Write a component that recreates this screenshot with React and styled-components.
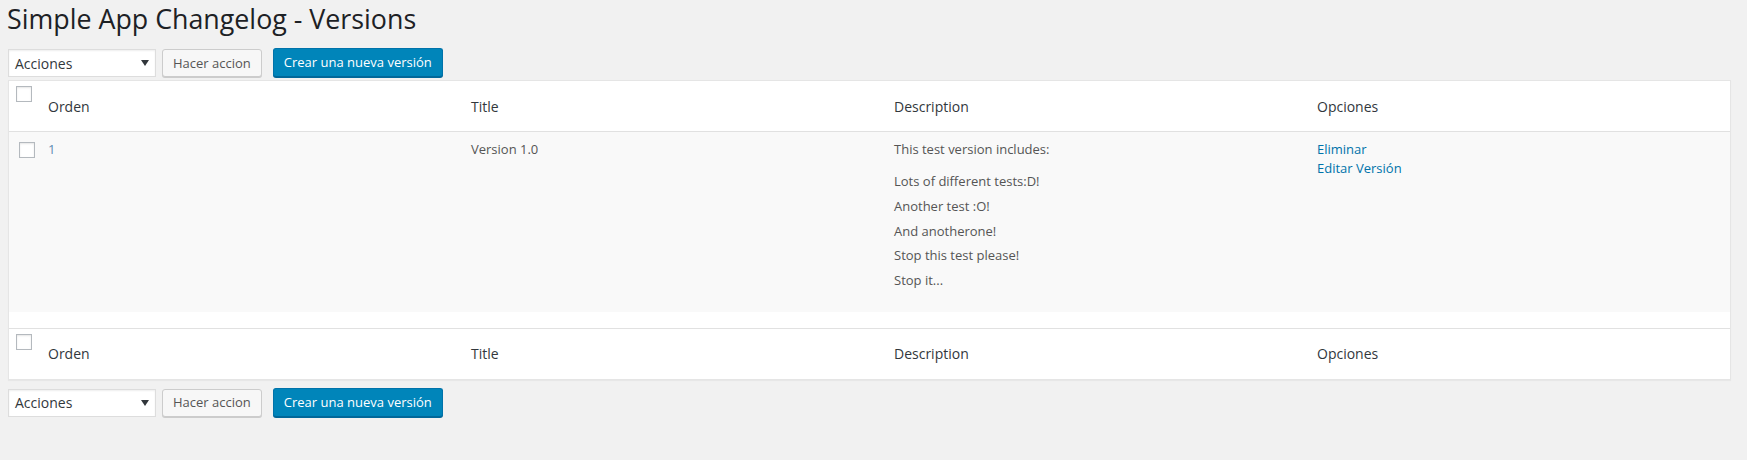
import React from 'react';
import styled, { createGlobalStyle } from 'styled-components';

const GlobalStyle = createGlobalStyle`
  html, body {
    margin: 0;
    padding: 0;
    background: #f1f1f1;
  }
  body {
    font-family: "Open Sans", sans-serif;
    color: #444;
    font-size: 13px;
  }
`;

const Wrap = styled.div`
  padding: 2px 16px 20px 8px;
`;

const Heading = styled.h1`
  margin: 0 0 0 -1px;
  font-size: 26.8px;
  font-weight: 400;
  line-height: 34px;
  color: #1d2125;
`;

const Toolbar = styled.div`
  display: flex;
  align-items: flex-end;
  margin-top: ${p => p.$top}px;
  margin-bottom: ${p => p.$bottom}px;
`;

const SelectBox = styled.div`
  box-sizing: border-box;
  width: 148px;
  height: 28px;
  display: flex;
  align-items: center;
  justify-content: space-between;
  padding: 0 6px 0 6px;
  background: #fff;
  border: 1px solid #ddd;
  box-shadow: inset 0 1px 2px rgba(0, 0, 0, 0.07);
  font-size: 14px;
  color: #32373c;
`;

const Button = styled.div`
  box-sizing: border-box;
  height: ${p => (p.$primary ? 29 : 28)}px;
  margin-left: ${p => p.$gap}px;
  padding: 0 10px 1px;
  display: flex;
  align-items: center;
  font-size: 13px;
  border-radius: 3px;
  white-space: nowrap;
  background: ${p => (p.$primary ? '#0085ba' : '#f7f7f7')};
  color: ${p => (p.$primary ? '#fff' : '#555')};
  border: 1px solid ${p => (p.$primary ? '#0073aa' : '#ccc')};
  border-bottom-color: ${p => (p.$primary ? '#006799' : '#ccc')};
  box-shadow: 0 1px 0 ${p => (p.$primary ? '#006799' : '#ccc')};
`;

const Table = styled.table`
  width: 100%;
  table-layout: fixed;
  border-collapse: separate;
  border-spacing: 0;
  background: #fff;
  border: 1px solid #e5e5e5;
  box-shadow: 0 1px 1px rgba(0, 0, 0, 0.04);
`;

const HeadCell = styled.th`
  height: 50px;
  padding: 0 10px;
  text-align: left;
  font-weight: 400;
  font-size: 14px;
  color: #32373c;
  vertical-align: middle;
  border-${p => (p.$foot ? 'top' : 'bottom')}: 1px solid #e1e1e1;
`;

const CheckHead = styled.th`
  padding: 5px 0 0 7px;
  vertical-align: top;
  border-${p => (p.$foot ? 'top' : 'bottom')}: 1px solid #e1e1e1;
`;

const Row = styled.tr`
  background: ${p => (p.$alt ? '#f9f9f9' : '#fff')};
`;

const Cell = styled.td`
  padding: 8px 10px;
  vertical-align: top;
  font-size: 13px;
  line-height: 18px;
  color: ${p => p.$color || '#555'};
`;

const CheckCell = styled.td`
  padding: 10px 0 0 10px;
  vertical-align: top;
`;

const Spacer = styled.td`
  height: 16px;
  padding: 0;
`;

const Box = styled.span`
  display: block;
  box-sizing: border-box;
  width: 16px;
  height: 16px;
  background: #fff;
  border: 1px solid #b4b9be;
  box-shadow: inset 0 1px 2px rgba(0, 0, 0, 0.1);
`;

const Intro = styled.p`
  margin: 0;
  line-height: 19.5px;
`;

const Changes = styled.ul`
  list-style: none;
  margin: 12.5px 0 14px;
  padding: 0;
  & > li {
    line-height: 18.8px;
    margin-bottom: 6px;
  }
`;

const Action = styled.a`
  display: block;
  line-height: 19px;
  color: #0073aa;
  text-decoration: none;
`;

const Caret = () => (
  <svg width="8" height="6" viewBox="0 0 8 6">
    <path d="M0 0h8L4 6z" fill="#32373c" />
  </svg>
);

const Actions = ({ top, bottom }) => (
  <Toolbar $top={top} $bottom={bottom}>
    <SelectBox>
      <span>Acciones</span>
      <Caret />
    </SelectBox>
    <Button $gap={6}>Hacer accion</Button>
    <Button $gap={11} $primary>Crear una nueva versión</Button>
  </Toolbar>
);

const columns = ['Orden', 'Title', 'Description', 'Opciones'];

const HeaderRow = ({ foot }) => (
  <tr>
    <CheckHead $foot={foot}>
      <Box />
    </CheckHead>
    {columns.map(c => (
      <HeadCell key={c} $foot={foot}>{c}</HeadCell>
    ))}
  </tr>
);

const changes = [
  'Lots of different tests:D!',
  'Another test :O!',
  'And anotherone!',
  'Stop this test please!',
  'Stop it...'
];

const App = () => (
  <Wrap>
    <GlobalStyle />
    <Heading>Simple App Changelog - Versions</Heading>
    <Actions top={12} bottom={3} />
    <Table>
      <colgroup>
        <col style={{ width: 29 }} />
        <col />
        <col />
        <col />
        <col />
      </colgroup>
      <thead>
        <HeaderRow />
      </thead>
      <tbody>
        <Row $alt>
          <CheckCell>
            <Box />
          </CheckCell>
          <Cell $color="#5f8db3">1</Cell>
          <Cell>Version 1.0</Cell>
          <Cell>
            <Intro>This test version includes:</Intro>
            <Changes>
              {changes.map(c => (
                <li key={c}>{c}</li>
              ))}
            </Changes>
          </Cell>
          <Cell>
            <Action href="#">Eliminar</Action>
            <Action href="#">Editar Versión</Action>
          </Cell>
        </Row>
        <Row>
          <Spacer colSpan={5} />
        </Row>
      </tbody>
      <tfoot>
        <HeaderRow foot />
      </tfoot>
    </Table>
    <Actions top={8} bottom={0} />
  </Wrap>
);

export default App;
